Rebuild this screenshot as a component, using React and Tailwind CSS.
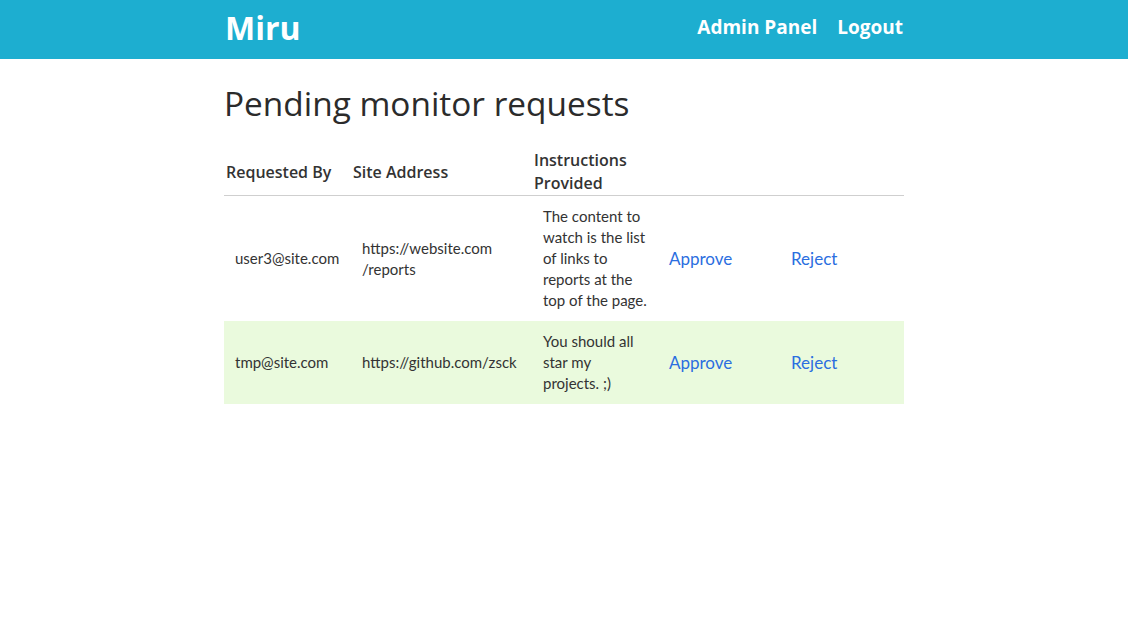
import React from 'react';

const requests = [
  {
    email: 'user3@site.com',
    site: ['https://website.com', '/reports'],
    notes: 'The content to watch is the list of links to reports at the top of the page.',
  },
  {
    email: 'tmp@site.com',
    site: ['https://github.com/zsck'],
    notes: 'You should all star my projects. ;)',
  },
];

const App = () => (
  <div className="min-h-screen bg-white text-[#333]">
    <header className="h-[59px] bg-[#1daed0]">
      <div className="mx-auto flex h-full w-[680px] items-center justify-between pb-[4px] font-['Open_Sans',sans-serif] text-white">
        <span className="pl-[1px] text-[32px] font-bold leading-none">Miru</span>
        <nav className="flex gap-[20px] pr-[1px] text-[19px] font-bold">
          <a href="#">Admin Panel</a>
          <a href="#">Logout</a>
        </nav>
      </div>
    </header>

    <main className="mx-auto w-[680px] pt-[22px]">
      <h1 className="font-['Open_Sans',sans-serif] text-[33.4px] font-medium leading-[44px] text-[#2b2b2b]">
        Pending monitor requests
      </h1>

      <table className="mt-[23px] w-full table-fixed border-collapse">
        <colgroup>
          <col className="w-[129px]" />
          <col className="w-[181px]" />
          <col className="w-[126px]" />
          <col className="w-[122px]" />
          <col className="w-[122px]" />
        </colgroup>
        <thead>
          <tr className="border-b border-[#cfcfcf] text-left font-['Open_Sans',sans-serif] text-[16px] font-semibold leading-[23px]">
            <th className="px-[2px] pt-[1px] align-middle font-semibold">Requested By</th>
            <th className="px-[0px] pt-[1px] align-middle font-semibold">Site Address</th>
            <th className="pl-0 pr-[20px] pt-[1px] align-middle font-semibold">Instructions Provided</th>
            <th />
            <th />
          </tr>
        </thead>
        <tbody className="font-['Lato',sans-serif] text-[15px] leading-[21px]">
          {requests.map((r, i) => (
            <tr key={r.email} className={i % 2 === 1 ? 'bg-[#eafadd]' : ''}>
              <td className="py-[10px] pl-[11px] pr-[4px] align-middle">{r.email}</td>
              <td className="py-[10px] pl-[9px] pr-[4px] align-middle">
                {r.site.map((s) => (
                  <div key={s}>{s}</div>
                ))}
              </td>
              <td className="py-[10px] pl-[9px] pr-[10px] align-middle">{r.notes}</td>
              <td className="py-[10px] pl-[9px] align-middle">
                <a href="#" className="text-[17px] text-[#2b6ee0]">Approve</a>
              </td>
              <td className="py-[10px] pl-[9px] align-middle">
                <a href="#" className="text-[17px] text-[#2b6ee0]">Reject</a>
              </td>
            </tr>
          ))}
        </tbody>
      </table>
    </main>
  </div>
);

export default App;
